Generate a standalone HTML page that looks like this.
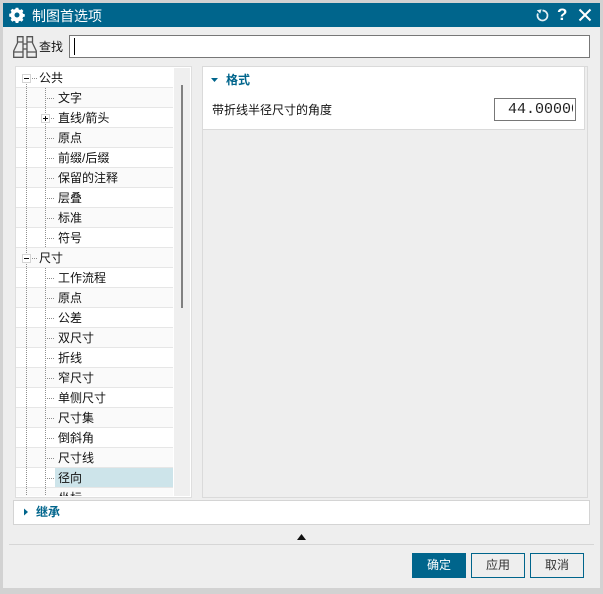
<!DOCTYPE html>
<html lang="zh">
<head>
<meta charset="utf-8">
<style>
html,body{margin:0;padding:0}
body{width:603px;height:594px;overflow:hidden;background:#d2d2d2;position:relative;font-family:"Liberation Sans","Noto Sans CJK SC",sans-serif;font-size:12px;color:#111}
div,span,svg{position:absolute;box-sizing:border-box}
.t{white-space:nowrap;line-height:20px;height:20px}
.row{left:16px;width:157px;height:20px;border-bottom:1px solid #e6e6e6}
.alt{background:#fafafa}
.vd{width:1px;background:repeating-linear-gradient(to bottom,#8f8f8f 0 1px,transparent 1px 2px)}
.hd{height:1px;background:repeating-linear-gradient(to right,#8f8f8f 0 1px,transparent 1px 2px)}
.box{width:9px;height:9px;background:#fff;border:1px solid #d4d4d4}
.box i{position:absolute;left:1px;top:3px;width:5px;height:1px;background:#111}
.box b{position:absolute;left:3px;top:1px;width:1px;height:5px;background:#111}
.btn{top:553px;width:54px;height:25px;border:1px solid #00658c;text-align:center;line-height:23px;color:#333}
</style>
</head>
<body>
<div style="left:3px;top:3px;width:597px;height:585px;background:#eeeeee"></div>
<div style="left:3px;top:3px;width:597px;height:24px;background:#00658c"></div>
<svg style="left:9px;top:7px" width="16" height="16" viewBox="0 0 16 16"><path d="M6.700 1.600h2.600l.4 1.700 1.400.6 1.500-.9 1.800 1.800-.9 1.500.6 1.400 1.700.4v2.400l-1.700.4-.6 1.400.9 1.500-1.800 1.800-1.500-.9-1.400.6-.4 1.700H6.700l-.4-1.700-1.400-.6-1.500.9-1.800-1.800.9-1.500-.6-1.400-1.700-.4V7.700l1.700-.4.6-1.400-.9-1.500 1.800-1.800 1.500.9 1.400-.6z" fill="#fff" transform="translate(0 -.9)"/><circle cx="8" cy="8" r="2.500" fill="#00658c"/></svg>
<div class="t" style="left:32px;top:6px;font-size:14px;color:#fff">制图首选项</div>
<svg style="left:535px;top:8px" width="15" height="15" viewBox="0 0 15 15"><path d="M7.500 2.500A5 5 0 1 1 2.900 5.500" fill="none" stroke="#e6f0f4" stroke-width="1.700"/><path d="M1.800 2.200L6.600 1.200 5.200 5.600z" fill="#e6f0f4"/></svg>
<div style="left:557px;top:5px;font-size:17px;font-weight:bold;color:#fff;line-height:20px;font-family:'Liberation Sans',sans-serif">?</div>
<svg style="left:578px;top:8px" width="14" height="14" viewBox="0 0 14 14"><path d="M1.500 1.500L12.500 12.500M12.500 1.500L1.500 12.500" stroke="#fff" stroke-width="2" fill="none"/></svg>

<svg style="left:13px;top:36px" width="24" height="22" viewBox="0 0 24 22" fill="none" stroke="#555" stroke-width="1.300"><path d="M4.500 .7H10V21.300H.7V15L4.500 7zM19.500 .7H14V21.300H23.300V15L19.500 7zM4.500 6H10M14 6H19.500M.7 16H10M14 16H23.300M10 8H14M10 13H14"/></svg>
<div class="t" style="left:39px;top:37px">查找</div>
<div style="left:69px;top:35px;width:521px;height:23px;background:#fff;border:1px solid #777"></div>
<div style="left:74px;top:38px;width:1px;height:17px;background:#000"></div>

<div style="left:15px;top:66px;width:177px;height:432px;background:#fff;border:1px solid #dedede"></div>
<div style="left:174px;top:68px;width:16px;height:428px;background:#efefef"></div>
<div style="left:181px;top:85px;width:2px;height:223px;background:#808080"></div>

<div class="row" style="top:68px"></div>
<div class="row alt" style="top:88px"></div>
<div class="row" style="top:108px"></div>
<div class="row alt" style="top:128px"></div>
<div class="row" style="top:148px"></div>
<div class="row alt" style="top:168px"></div>
<div class="row" style="top:188px"></div>
<div class="row alt" style="top:208px"></div>
<div class="row" style="top:228px"></div>
<div class="row alt" style="top:248px"></div>
<div class="row" style="top:268px"></div>
<div class="row alt" style="top:288px"></div>
<div class="row" style="top:308px"></div>
<div class="row alt" style="top:328px"></div>
<div class="row" style="top:348px"></div>
<div class="row alt" style="top:368px"></div>
<div class="row" style="top:388px"></div>
<div class="row alt" style="top:408px"></div>
<div class="row" style="top:428px"></div>
<div class="row alt" style="top:448px"></div>
<div class="row" style="top:468px"></div>
<div style="left:16px;top:488px;width:157px;height:8px;background:#fafafa"></div>
<div style="left:55px;top:468px;width:118px;height:19px;background:#cde4ea"></div>

<div class="vd" style="left:26px;top:84px;height:412px"></div>
<div class="vd" style="left:45px;top:88px;height:160px"></div>
<div class="vd" style="left:45px;top:268px;height:228px"></div>
<div class="hd" style="left:32px;top:78px;width:5px"></div>
<div class="hd" style="left:32px;top:258px;width:5px"></div>
<div class="hd" style="left:47px;top:98px;width:8px"></div>
<div class="hd" style="left:51px;top:118px;width:4px"></div>
<div class="hd" style="left:47px;top:138px;width:8px"></div>
<div class="hd" style="left:47px;top:158px;width:8px"></div>
<div class="hd" style="left:47px;top:178px;width:8px"></div>
<div class="hd" style="left:47px;top:198px;width:8px"></div>
<div class="hd" style="left:47px;top:218px;width:8px"></div>
<div class="hd" style="left:47px;top:238px;width:8px"></div>
<div class="hd" style="left:47px;top:278px;width:8px"></div>
<div class="hd" style="left:47px;top:298px;width:8px"></div>
<div class="hd" style="left:47px;top:318px;width:8px"></div>
<div class="hd" style="left:47px;top:338px;width:8px"></div>
<div class="hd" style="left:47px;top:358px;width:8px"></div>
<div class="hd" style="left:47px;top:378px;width:8px"></div>
<div class="hd" style="left:47px;top:398px;width:8px"></div>
<div class="hd" style="left:47px;top:418px;width:8px"></div>
<div class="hd" style="left:47px;top:438px;width:8px"></div>
<div class="hd" style="left:47px;top:458px;width:8px"></div>
<div class="hd" style="left:47px;top:478px;width:8px"></div>
<div class="box" style="left:22px;top:74px"><i></i></div>
<div class="box" style="left:22px;top:254px"><i></i></div>
<div class="box" style="left:41px;top:114px"><i></i><b></b></div>

<div class="t" style="left:39px;top:68px">公共</div>
<div class="t" style="left:58px;top:88px">文字</div>
<div class="t" style="left:58px;top:108px">直线/箭头</div>
<div class="t" style="left:58px;top:128px">原点</div>
<div class="t" style="left:58px;top:148px">前缀/后缀</div>
<div class="t" style="left:58px;top:168px">保留的注释</div>
<div class="t" style="left:58px;top:188px">层叠</div>
<div class="t" style="left:58px;top:208px">标准</div>
<div class="t" style="left:58px;top:228px">符号</div>
<div class="t" style="left:39px;top:248px">尺寸</div>
<div class="t" style="left:58px;top:268px">工作流程</div>
<div class="t" style="left:58px;top:288px">原点</div>
<div class="t" style="left:58px;top:308px">公差</div>
<div class="t" style="left:58px;top:328px">双尺寸</div>
<div class="t" style="left:58px;top:348px">折线</div>
<div class="t" style="left:58px;top:368px">窄尺寸</div>
<div class="t" style="left:58px;top:388px">单侧尺寸</div>
<div class="t" style="left:58px;top:408px">尺寸集</div>
<div class="t" style="left:58px;top:428px">倒斜角</div>
<div class="t" style="left:58px;top:448px">尺寸线</div>
<div class="t" style="left:58px;top:468px">径向</div>
<div style="left:58px;top:488px;width:110px;height:8px;overflow:hidden"><span class="t" style="left:0;top:0">坐标</span></div>

<div style="left:202px;top:66px;width:386px;height:432px;background:#eeeeee;border:1px solid #dadada"></div>
<div style="left:203px;top:67px;width:382px;height:63px;background:#fff;border-bottom:1px solid #dadada;border-right:1px solid #dadada"></div>
<svg style="left:211px;top:76px" width="8" height="8" viewBox="0 0 8 8"><path d="M0 2h7L3.500 6z" fill="#00658c"/></svg>
<div class="t" style="left:226px;top:70px;font-weight:bold;color:#00658c">格式</div>
<div class="t" style="left:212px;top:100px">带折线半径尺寸的角度</div>
<div style="left:494px;top:98px;width:82px;height:23px;background:#fff;border:1px solid #777"><div style="left:0;top:0;width:78px;height:21px;overflow:hidden"><span style="left:13px;top:2px;font:15px/18px 'Liberation Mono',monospace;color:#222;white-space:nowrap">44.00000</span></div></div>

<div style="left:13px;top:500px;width:577px;height:25px;background:#fff;border:1px solid #d4d4d4"></div>
<svg style="left:23px;top:508px" width="7" height="9" viewBox="0 0 7 9"><path d="M1 .5v7L5 4z" fill="#00658c"/></svg>
<div class="t" style="left:36px;top:502px;font-weight:bold;color:#00658c">继承</div>
<svg style="left:297px;top:534px" width="9" height="6" viewBox="0 0 9 6"><path d="M0 6L4.500 0 9 6z" fill="#111"/></svg>
<div style="left:9px;top:544px;width:585px;height:1px;background:#d6d6d6"></div>

<div class="btn" style="left:412px;background:#00658c;color:#fff">确定</div>
<div class="btn" style="left:471px">应用</div>
<div class="btn" style="left:530px">取消</div>
</body>
</html>
